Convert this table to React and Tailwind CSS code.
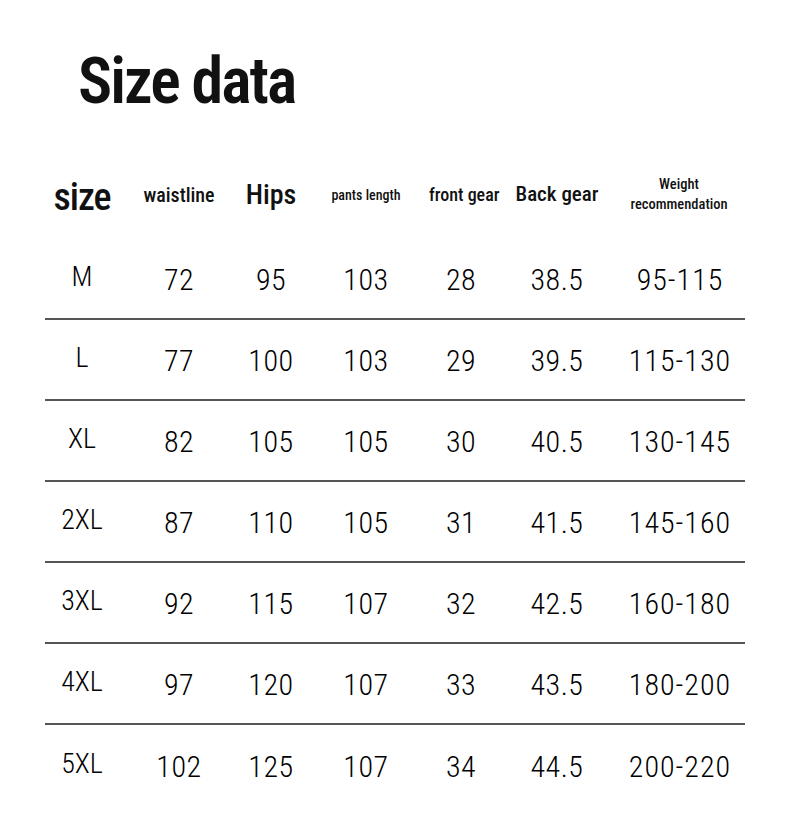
import React from 'react';

const ROWS = [
  ['M', '72', '95', '103', '28', '38.5', '95-115'],
  ['L', '77', '100', '103', '29', '39.5', '115-130'],
  ['XL', '82', '105', '105', '30', '40.5', '130-145'],
  ['2XL', '87', '110', '105', '31', '41.5', '145-160'],
  ['3XL', '92', '115', '107', '32', '42.5', '160-180'],
  ['4XL', '97', '120', '107', '33', '43.5', '180-200'],
  ['5XL', '102', '125', '107', '34', '44.5', '200-220'],
];

const grid = 'grid grid-cols-[74px_120px_64px_126px_64px_128px_124px] items-center';

const App = () => {
  return (
    <div className="w-[790px] h-[827px] bg-white text-[#111] font-['Roboto_Condensed','Roboto',sans-serif] [font-stretch:condensed]">
      {/* Title */}
      <h1 className="pl-[78px] pt-[50px] text-[64px] leading-none font-semibold tracking-[-2px]">Size data</h1>

      <div className="mt-[36px] ml-[45px] w-[700px]">
        {/* Header */}
        <div className={`${grid} h-[89px] text-center whitespace-nowrap font-medium`}>
          <div className="text-[38px] leading-none tracking-[-1px] mt-[4px]">size</div>
          <div className="text-[20px] leading-none">waistline</div>
          <div className="text-[28px] leading-none">Hips</div>
          <div className="text-[14px] leading-none">pants length</div>
          <div className="text-[18px] leading-none">front gear</div>
          <div className="text-[21px] leading-none">Back gear</div>
          <div className="text-[14.5px] leading-[20px] pr-[8px]">Weight<br />recommendation</div>
        </div>

        {/* Rows */}
        {ROWS.map((r, i) => (
          <div
            key={r[0]}
            className={`${grid} h-[81px] text-center ${i < ROWS.length - 1 ? 'border-b-[2.5px] border-[#555]' : ''}`}
          >
            <div className="text-[28px] font-light leading-none -mt-[4px] text-black">{r[0]}</div>
            {r.slice(1).map((v, j) => (
              <div
                key={j}
                className={`text-[30px] font-light text-black leading-none mt-[2px] ${j === 5 ? 'pr-[6px] tracking-[1px]' : 'tracking-[0.5px]'}`}
              >
                {v}
              </div>
            ))}
          </div>
        ))}
      </div>
    </div>
  );
};

export default App;
